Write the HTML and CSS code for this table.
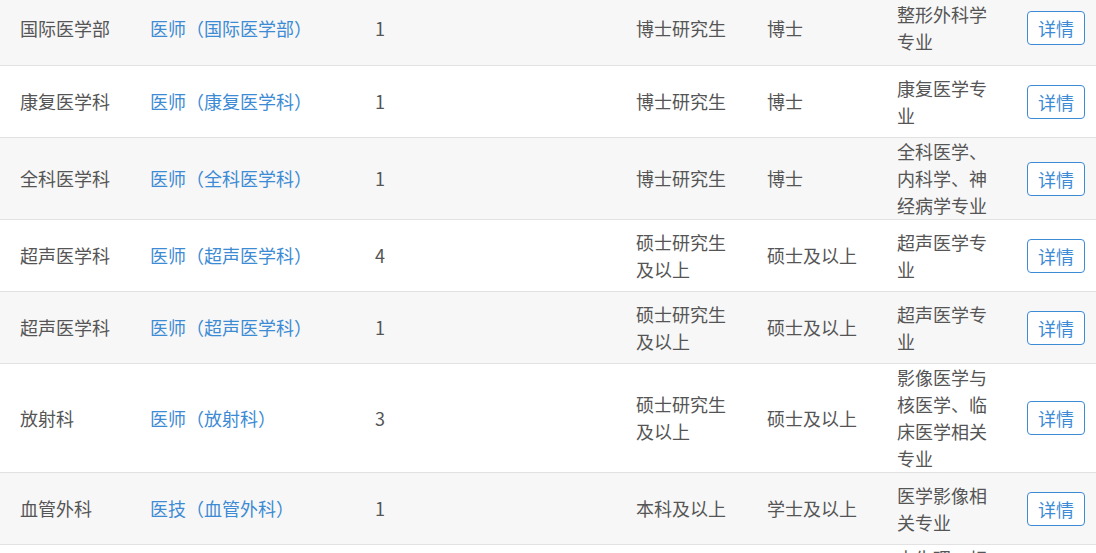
FILE: index.html
```html
<!DOCTYPE html>
<html lang="zh-CN">
<head>
<meta charset="utf-8">
<title>招聘岗位</title>
<link rel="stylesheet" href="styles.css">
</head>
<body>
<div class="wrap">
<table class="jobs">
  <colgroup>
    <col class="c1"><col class="c2"><col class="c3"><col class="c4"><col class="c5"><col class="c6"><col class="c7">
  </colgroup>
  <tbody>
    <tr class="first">
      <td>国际医学部</td>
      <td><a class="link" href="#">医师（国际医学部）</a></td>
      <td>1</td>
      <td>博士研究生</td>
      <td>博士</td>
      <td>整形外科学专业</td>
      <td><button class="btn">详情</button></td>
    </tr>
    <tr>
      <td>康复医学科</td>
      <td><a class="link" href="#">医师（康复医学科）</a></td>
      <td>1</td>
      <td>博士研究生</td>
      <td>博士</td>
      <td>康复医学专业</td>
      <td><button class="btn">详情</button></td>
    </tr>
    <tr>
      <td>全科医学科</td>
      <td><a class="link" href="#">医师（全科医学科）</a></td>
      <td>1</td>
      <td>博士研究生</td>
      <td>博士</td>
      <td>全科医学、内科学、神经病学专业</td>
      <td><button class="btn">详情</button></td>
    </tr>
    <tr>
      <td>超声医学科</td>
      <td><a class="link" href="#">医师（超声医学科）</a></td>
      <td>4</td>
      <td>硕士研究生及以上</td>
      <td>硕士及以上</td>
      <td>超声医学专业</td>
      <td><button class="btn">详情</button></td>
    </tr>
    <tr>
      <td>超声医学科</td>
      <td><a class="link" href="#">医师（超声医学科）</a></td>
      <td>1</td>
      <td>硕士研究生及以上</td>
      <td>硕士及以上</td>
      <td>超声医学专业</td>
      <td><button class="btn">详情</button></td>
    </tr>
    <tr>
      <td>放射科</td>
      <td><a class="link" href="#">医师（放射科）</a></td>
      <td>3</td>
      <td>硕士研究生及以上</td>
      <td>硕士及以上</td>
      <td>影像医学与核医学、临床医学相关专业</td>
      <td><button class="btn">详情</button></td>
    </tr>
    <tr>
      <td>血管外科</td>
      <td><a class="link" href="#">医技（血管外科）</a></td>
      <td>1</td>
      <td>本科及以上</td>
      <td>学士及以上</td>
      <td>医学影像相关专业</td>
      <td><button class="btn">详情</button></td>
    </tr>
    <tr>
      <td>心血管内科</td>
      <td><a class="link" href="#">医技（心血管内科）</a></td>
      <td>1</td>
      <td>本科及以上</td>
      <td>学士及以上</td>
      <td>电生理、相关专业或医学影像相关专业</td>
      <td><button class="btn">详情</button></td>
    </tr>
  </tbody>
</table>
</div>
</body>
</html>
```

FILE: styles.css
```css
html, body {
  margin: 0;
  padding: 0;
  background: #ffffff;
}
body {
  font-family: "Noto Sans CJK SC", "Noto Sans", sans-serif;
  color: #555555;
  overflow: hidden;
}
.wrap {
  width: 1096px;
  height: 553px;
  overflow: hidden;
}
.jobs {
  border-collapse: collapse;
  table-layout: fixed;
  width: 1096px;
  margin-top: -9px;
  font-size: 18px;
  line-height: 27px;
}
.c1 { width: 130px; }
.c2 { width: 225px; }
.c3 { width: 261px; }
.c4 { width: 131px; }
.c5 { width: 130px; }
.c6 { width: 130px; }
.c7 { width: 89px; }
.jobs td {
  height: 71px;
  padding: 0 20px;
  vertical-align: middle;
  border-top: 1px solid #e2e2e2;
  text-align: left;
  word-break: break-all;
}
.jobs td:last-child {
  padding-right: 0;
  white-space: nowrap;
}
.jobs tr:nth-child(odd) td {
  background: #f7f7f7;
}
.jobs tr.first td {
  height: 74px;
  border-top: none;
}
.link {
  color: #3d8bd4;
  text-decoration: none;
}
.btn {
  font-family: inherit;
  font-size: 18px;
  line-height: 26px;
  color: #3d8bd4;
  background: #ffffff;
  border: 1px solid #3d8bd4;
  border-radius: 4px;
  padding: 3px 10px;
  margin: 0;
  white-space: nowrap;
  cursor: pointer;
}
```
